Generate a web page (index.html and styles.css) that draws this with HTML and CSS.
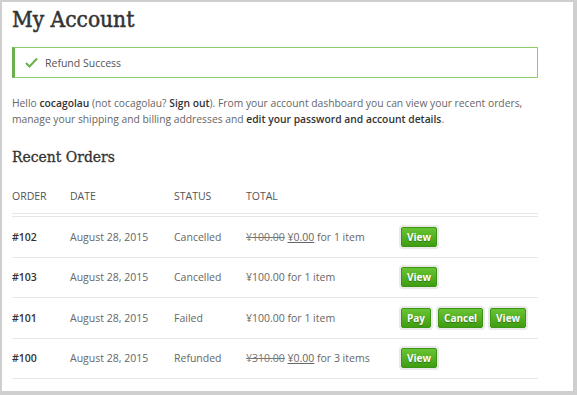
FILE: index.html
```html
<!DOCTYPE html>
<html lang="en">
<head>
  <meta charset="UTF-8">
  <title>My Account</title>
  <link rel="stylesheet" href="styles.css">
</head>
<body>
<div class="page">
  <h1>My Account</h1>
  <div class="notice">
    <svg class="check" width="13" height="11" viewBox="0 0 13 11"><path d="M1 6 L4.5 9.5 L12 1.5" fill="none" stroke="#6ab04c" stroke-width="2"/></svg>
    Refund Success
  </div>
  <p class="intro">Hello <b>cocagolau</b> (not cocagolau? <b>Sign out</b>). From your account dashboard you can view your recent orders, manage your shipping and billing addresses and <b>edit your password and account details</b>.</p>
  <h2>Recent Orders</h2>
  <table class="orders">
    <thead>
      <tr><th class="c-order">Order</th><th class="c-date">Date</th><th class="c-status">Status</th><th class="c-total">Total</th><th></th></tr>
    </thead>
    <tbody>
      <tr>
        <td class="num">#102</td><td>August 28, 2015</td><td>Cancelled</td>
        <td><del>¥100.00</del> <ins>¥0.00</ins> for 1 item</td>
        <td><span class="btn">View</span></td>
      </tr>
      <tr>
        <td class="num">#103</td><td>August 28, 2015</td><td>Cancelled</td>
        <td>¥100.00 for 1 item</td>
        <td><span class="btn">View</span></td>
      </tr>
      <tr>
        <td class="num">#101</td><td>August 28, 2015</td><td>Failed</td>
        <td>¥100.00 for 1 item</td>
        <td><span class="btn">Pay</span><span class="btn">Cancel</span><span class="btn">View</span></td>
      </tr>
      <tr>
        <td class="num">#100</td><td>August 28, 2015</td><td>Refunded</td>
        <td><del>¥310.00</del> <ins>¥0.00</ins> for 3 items</td>
        <td><span class="btn">View</span></td>
      </tr>
    </tbody>
  </table>
</div>
</body>
</html>
```

FILE: styles.css
```css
html, body {
  margin: 0;
  height: 100%;
}
body {
  background: #cfcfcf;
  font-family: "Open Sans", sans-serif;
  color: #666;
  padding: 2px 4px 4px 2px;
  box-sizing: border-box;
}
.page {
  background: #fff;
  height: 100%;
  padding: 0 35px 0 10px;
  box-sizing: border-box;
  overflow: hidden;
}
h1 {
  font-family: "DejaVu Serif Condensed", "DejaVu Serif", serif;
  font-stretch: condensed;
  font-weight: normal;
  font-size: 22.5px;
  color: #333;
  -webkit-text-stroke: 0.5px #333;
  margin: 0;
  padding-top: 2px;
  line-height: 30px;
}
.notice {
  margin-top: 13px;
  height: 31px;
  box-sizing: border-box;
  border: 1px solid #8fcc6c;
  border-left: 3px solid #6ab04c;
  display: flex;
  align-items: center;
  padding-left: 10px;
  font-size: 10.5px;
  color: #555;
}
.check {
  margin-right: 7px;
}
.intro {
  font-size: 10.3px;
  line-height: 16px;
  margin: 17px 0 0;
}
.intro b {
  color: #333;
  font-weight: 600;
}
h2 {
  font-family: "DejaVu Serif Condensed", "DejaVu Serif", serif;
  font-stretch: condensed;
  font-weight: normal;
  font-size: 15.5px;
  color: #333;
  -webkit-text-stroke: 0.3px #333;
  margin: 19px 0 0;
  line-height: 22px;
}
.orders {
  width: 100%;
  table-layout: fixed;
  border-collapse: collapse;
  margin-top: 10px;
  font-size: 10.5px;
}
.orders th {
  text-align: left;
  font-weight: normal;
  text-transform: uppercase;
  color: #555;
  line-height: 16px;
  padding: 10px 0 9px;
  border-bottom: 4px double #e6e6e6;
}
.c-order { width: 58px; }
.c-date { width: 104px; }
.c-status { width: 72px; }
.c-total { width: 155px; }
.orders td {
  height: 39.5px;
  padding: 0;
  border-bottom: 1px solid #e8e8e8;
  vertical-align: middle;
  white-space: nowrap;
}
.orders td.num {
  font-weight: 600;
  color: #333;
}
del {
  color: #777;
}
ins {
  text-decoration: underline;
}
.btn {
  display: inline-block;
  background: linear-gradient(#69c434, #3f9d12);
  border: 1px solid #3c9512;
  border-radius: 2px;
  box-shadow: 0 0 0 2px #e9e9e9;
  color: #fff;
  font-weight: bold;
  font-size: 10px;
  text-shadow: 0 1px 1px rgba(0,0,0,0.35);
  padding: 3px 5px;
  line-height: 12px;
  margin-right: 7px;
}
```
